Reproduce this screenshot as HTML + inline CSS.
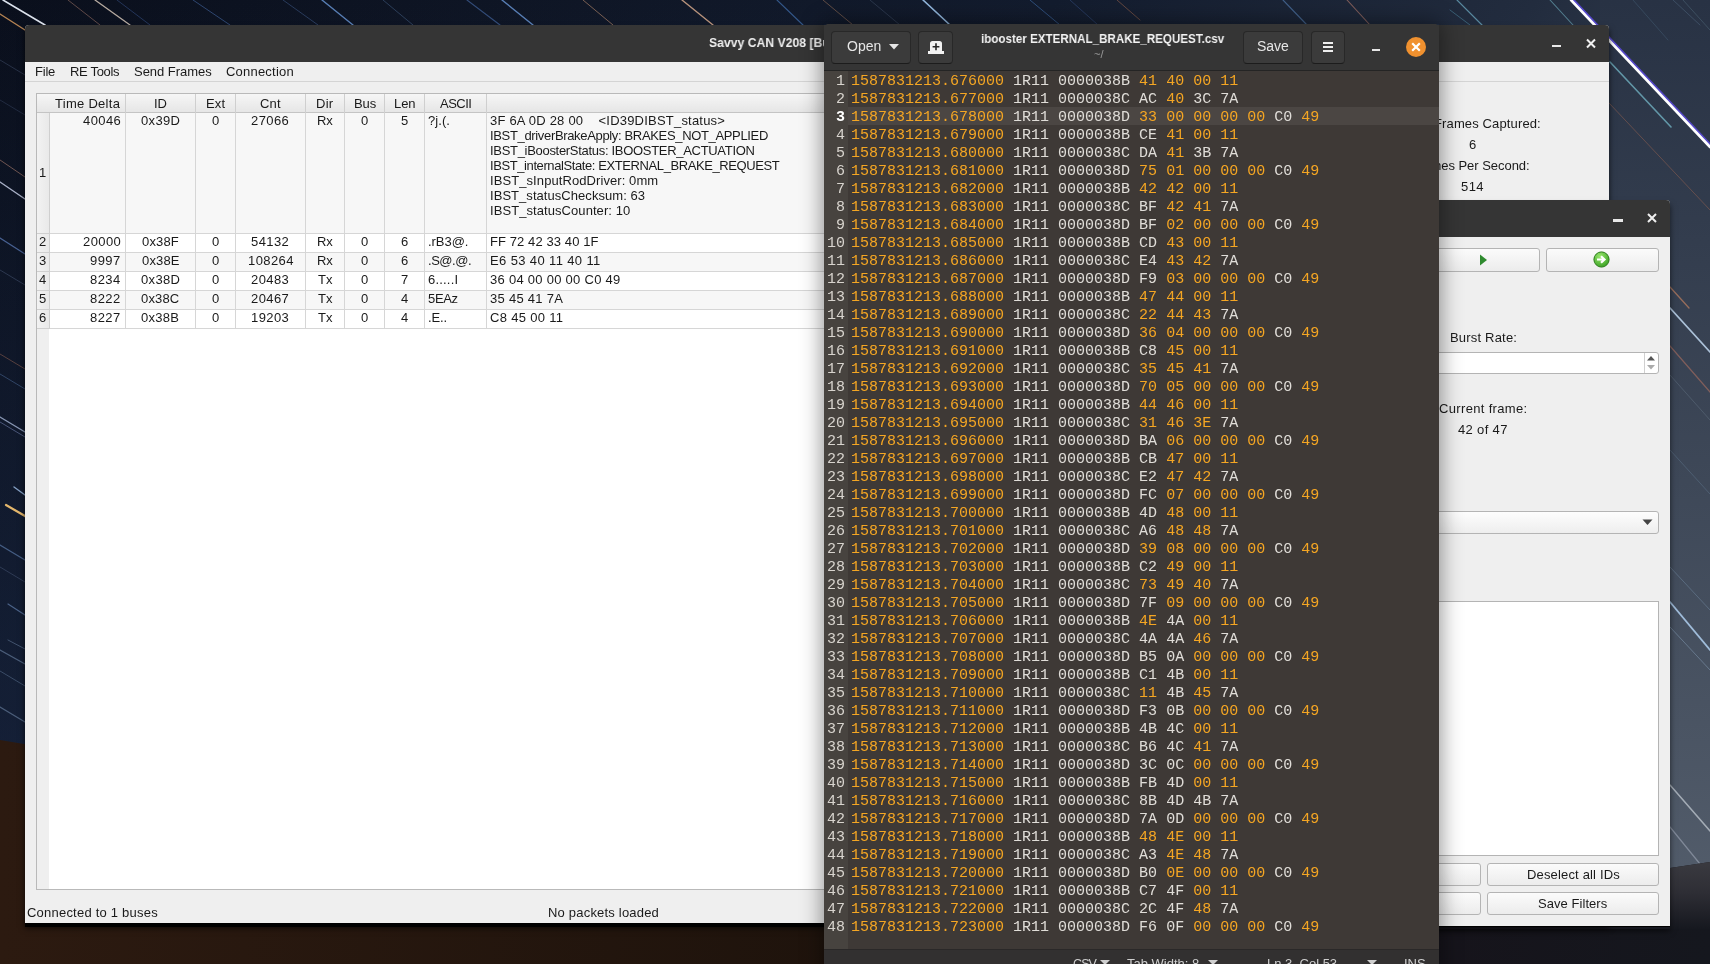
<!DOCTYPE html><html><head><meta charset="utf-8"><style>
*{box-sizing:border-box}
html,body{margin:0;padding:0}
body{width:1710px;height:964px;position:relative;overflow:hidden;background:#0d1422;font-family:"Liberation Sans",sans-serif}
.abs{position:absolute;will-change:transform}
.qt{position:absolute;will-change:transform;font-family:"Liberation Sans",sans-serif;font-size:13px;line-height:15px;white-space:pre}
.mono{font-family:"Liberation Mono",monospace;will-change:transform}
</style></head><body>
<svg class="abs" style="left:0;top:0" width="1710" height="964" viewBox="0 0 1710 964">
<defs>
<linearGradient id="sky" x1="0" y1="0" x2="1" y2="0.35">
<stop offset="0" stop-color="#0a0f1c"/><stop offset="0.55" stop-color="#131c2e"/><stop offset="0.8" stop-color="#222c3e"/><stop offset="1" stop-color="#3a4555"/>
</linearGradient>
<linearGradient id="skyr" x1="0" y1="0" x2="0" y2="1">
<stop offset="0" stop-color="#283244"/><stop offset="0.5" stop-color="#3e4858"/><stop offset="1" stop-color="#56606e"/>
</linearGradient>
<linearGradient id="mtn" x1="0" y1="0" x2="1" y2="0">
<stop offset="0" stop-color="#2c1a10"/><stop offset="0.5" stop-color="#1e130c"/><stop offset="0.8" stop-color="#16131a"/><stop offset="1" stop-color="#15171e"/>
</linearGradient>
<linearGradient id="ridge" x1="0" y1="0" x2="0" y2="1"><stop offset="0" stop-color="#3a3a40"/><stop offset="0.45" stop-color="#2e2e35"/><stop offset="1" stop-color="#15171e"/></linearGradient>
<linearGradient id="skyv" x1="0" y1="0" x2="0" y2="1"><stop offset="0" stop-color="#1a2a48" stop-opacity="0"/><stop offset="0.77" stop-color="#1c2c4c" stop-opacity="0.45"/><stop offset="1" stop-color="#1c2c4c" stop-opacity="0.45"/></linearGradient>
</defs>
<rect width="1710" height="964" fill="url(#sky)"/><rect width="1600" height="964" fill="url(#skyv)"/>
<rect x="1600" y="0" width="110" height="964" fill="url(#skyr)"/>
<line x1="3" y1="0" x2="45" y2="25" stroke="#e8eef8" stroke-width="1.6" opacity="0.95" stroke-linecap="round"/><line x1="68" y1="0" x2="100" y2="25" stroke="#b08070" stroke-width="1.0" opacity="0.5" stroke-linecap="round"/><line x1="95" y1="0" x2="130" y2="25" stroke="#e0d0c0" stroke-width="1.3" opacity="0.8" stroke-linecap="round"/><line x1="117" y1="0" x2="150" y2="25" stroke="#4060a0" stroke-width="1.0" opacity="0.45" stroke-linecap="round"/><line x1="193" y1="0" x2="230" y2="25" stroke="#4a70b0" stroke-width="1.0" opacity="0.55" stroke-linecap="round"/><line x1="283" y1="0" x2="318" y2="25" stroke="#4a6aa0" stroke-width="1.0" opacity="0.45" stroke-linecap="round"/><line x1="322" y1="0" x2="353" y2="25" stroke="#6a98d8" stroke-width="1.4" opacity="0.8" stroke-linecap="round"/><line x1="383" y1="0" x2="413" y2="25" stroke="#50709a" stroke-width="1.0" opacity="0.45" stroke-linecap="round"/><line x1="467" y1="0" x2="500" y2="25" stroke="#4a70b0" stroke-width="1.1" opacity="0.6" stroke-linecap="round"/><line x1="502" y1="0" x2="533" y2="25" stroke="#6a98d8" stroke-width="1.4" opacity="0.8" stroke-linecap="round"/><line x1="583" y1="0" x2="613" y2="25" stroke="#c09070" stroke-width="1.0" opacity="0.6" stroke-linecap="round"/><line x1="682" y1="0" x2="713" y2="25" stroke="#e0b090" stroke-width="1.4" opacity="0.8" stroke-linecap="round"/><line x1="777" y1="0" x2="803" y2="25" stroke="#4a80c8" stroke-width="1.1" opacity="0.6" stroke-linecap="round"/><line x1="823" y1="0" x2="853" y2="25" stroke="#b08060" stroke-width="1.0" opacity="0.5" stroke-linecap="round"/><line x1="870" y1="0" x2="900" y2="25" stroke="#50607a" stroke-width="1.0" opacity="0.4" stroke-linecap="round"/><line x1="923" y1="0" x2="950" y2="25" stroke="#a0c8f0" stroke-width="1.6" opacity="0.9" stroke-linecap="round"/><line x1="1030" y1="0" x2="1060" y2="25" stroke="#4a80c8" stroke-width="1.0" opacity="0.5" stroke-linecap="round"/><line x1="1070" y1="0" x2="1098" y2="25" stroke="#4060a0" stroke-width="1.0" opacity="0.4" stroke-linecap="round"/><line x1="1117" y1="0" x2="1140" y2="20" stroke="#b07050" stroke-width="1.0" opacity="0.5" stroke-linecap="round"/><line x1="1283" y1="0" x2="1307" y2="25" stroke="#5a88c0" stroke-width="1.1" opacity="0.6" stroke-linecap="round"/><line x1="1347" y1="0" x2="1370" y2="25" stroke="#c08070" stroke-width="1.1" opacity="0.6" stroke-linecap="round"/><line x1="1457" y1="0" x2="1482" y2="25" stroke="#70b0c8" stroke-width="1.2" opacity="0.7" stroke-linecap="round"/><line x1="1450" y1="10" x2="1470" y2="25" stroke="#5090a8" stroke-width="1.0" opacity="0.5" stroke-linecap="round"/><line x1="1550" y1="0" x2="1573" y2="25" stroke="#70b0c0" stroke-width="1.1" opacity="0.6" stroke-linecap="round"/><line x1="1673" y1="0" x2="1700" y2="25" stroke="#506880" stroke-width="1.0" opacity="0.5" stroke-linecap="round"/><line x1="1633" y1="0" x2="1668" y2="40" stroke="#4a6880" stroke-width="1.0" opacity="0.4" stroke-linecap="round"/><line x1="1683" y1="0" x2="1710" y2="30" stroke="#5a7888" stroke-width="1.0" opacity="0.4" stroke-linecap="round"/><line x1="1573" y1="0" x2="1712" y2="147" stroke="#5a4ad8" stroke-width="3.0" opacity="0.9" stroke-linecap="round"/><line x1="1571" y1="0" x2="1710" y2="147" stroke="#ffffff" stroke-width="2.6" opacity="1.0" stroke-linecap="round"/><line x1="1610" y1="62" x2="1671" y2="127" stroke="#70b0c0" stroke-width="1.6" opacity="0.8" stroke-linecap="round"/><line x1="1609" y1="103" x2="1710" y2="210" stroke="#906050" stroke-width="1.0" opacity="0.55" stroke-linecap="round"/><line x1="1670" y1="287" x2="1689" y2="308" stroke="#c08060" stroke-width="1.3" opacity="0.7" stroke-linecap="round"/><line x1="1670" y1="308" x2="1710" y2="352" stroke="#c0d8f0" stroke-width="1.8" opacity="0.85" stroke-linecap="round"/><line x1="1670" y1="346" x2="1710" y2="392" stroke="#b07060" stroke-width="1.2" opacity="0.6" stroke-linecap="round"/><line x1="1670" y1="375" x2="1710" y2="420" stroke="#607080" stroke-width="1.0" opacity="0.5" stroke-linecap="round"/><line x1="1670" y1="450" x2="1710" y2="494" stroke="#607890" stroke-width="1.0" opacity="0.45" stroke-linecap="round"/><line x1="1670" y1="567" x2="1710" y2="610" stroke="#7088a0" stroke-width="1.0" opacity="0.5" stroke-linecap="round"/><line x1="1670" y1="602" x2="1710" y2="650" stroke="#b0d0f0" stroke-width="1.8" opacity="0.85" stroke-linecap="round"/><line x1="1670" y1="627" x2="1710" y2="670" stroke="#8098b0" stroke-width="1.0" opacity="0.55" stroke-linecap="round"/><line x1="1670" y1="785" x2="1710" y2="831" stroke="#c0c8d0" stroke-width="1.5" opacity="0.75" stroke-linecap="round"/><line x1="1670" y1="827" x2="1700" y2="864" stroke="#a0a8b8" stroke-width="1.2" opacity="0.6" stroke-linecap="round"/><line x1="0" y1="160" x2="25" y2="177" stroke="#b08070" stroke-width="1.0" opacity="0.6" stroke-linecap="round"/><line x1="0" y1="182" x2="25" y2="199" stroke="#d0d8f0" stroke-width="1.4" opacity="0.8" stroke-linecap="round"/><line x1="0" y1="238" x2="25" y2="254" stroke="#6080c0" stroke-width="1.2" opacity="0.7" stroke-linecap="round"/><line x1="0" y1="270" x2="25" y2="285" stroke="#506080" stroke-width="1.0" opacity="0.45" stroke-linecap="round"/><line x1="0" y1="354" x2="25" y2="369" stroke="#906050" stroke-width="1.0" opacity="0.55" stroke-linecap="round"/><line x1="0" y1="374" x2="25" y2="389" stroke="#5070a0" stroke-width="1.0" opacity="0.5" stroke-linecap="round"/><line x1="0" y1="417" x2="25" y2="432" stroke="#b0c0e0" stroke-width="1.3" opacity="0.75" stroke-linecap="round"/><line x1="0" y1="422" x2="25" y2="437" stroke="#8090c0" stroke-width="1.0" opacity="0.5" stroke-linecap="round"/><line x1="14" y1="487" x2="25" y2="495" stroke="#a0c0e8" stroke-width="1.4" opacity="0.8" stroke-linecap="round"/><line x1="6" y1="505" x2="25" y2="516" stroke="#f0c070" stroke-width="2.2" opacity="0.95" stroke-linecap="round"/><line x1="0" y1="545" x2="25" y2="560" stroke="#6080b0" stroke-width="1.2" opacity="0.65" stroke-linecap="round"/><line x1="0" y1="567" x2="25" y2="582" stroke="#506080" stroke-width="1.0" opacity="0.45" stroke-linecap="round"/><line x1="8" y1="604" x2="25" y2="615" stroke="#7090c0" stroke-width="1.2" opacity="0.6" stroke-linecap="round"/><line x1="8" y1="640" x2="25" y2="649" stroke="#7088a8" stroke-width="1.0" opacity="0.5" stroke-linecap="round"/><line x1="0" y1="650" x2="25" y2="664" stroke="#7088a8" stroke-width="1.2" opacity="0.6" stroke-linecap="round"/><line x1="0" y1="671" x2="25" y2="686" stroke="#607898" stroke-width="1.0" opacity="0.5" stroke-linecap="round"/><line x1="0" y1="707" x2="25" y2="722" stroke="#7088a8" stroke-width="1.2" opacity="0.6" stroke-linecap="round"/><line x1="0" y1="100" x2="25" y2="115" stroke="#405070" stroke-width="1.0" opacity="0.4" stroke-linecap="round"/><line x1="0" y1="14" x2="25" y2="30" stroke="#e0a060" stroke-width="1.4" opacity="0.8" stroke-linecap="round"/><line x1="0" y1="60" x2="25" y2="75" stroke="#506080" stroke-width="1.0" opacity="0.4" stroke-linecap="round"/>
<path d="M0,740 L120,760 L400,800 L800,850 L1200,880 L1500,880 L1640,870 L1670,868 L1710,862 L1710,964 L0,964 Z" fill="url(#mtn)"/><path d="M1640,870 L1670,868 L1710,862 L1710,930 L1640,930 Z" fill="url(#ridge)"/>

</svg>
<div class="abs" style="left:25px;top:28px;width:1584px;height:898px;box-shadow:0 2px 6px rgba(0,0,0,0.7)"></div>
<div class="abs" style="left:25px;top:923px;width:1584px;height:4px;background:#000"></div>
<div class="abs" style="left:25px;top:25px;width:1584px;height:898px;background:#efefef;border-radius:4px 4px 0 0;overflow:hidden">
<div class="abs" style="left:0;top:0;width:100%;height:37px;background:#353535"></div>
<div class="abs" style="left:684px;top:10px;font-size:13.5px;line-height:16px;font-weight:bold;color:#f0f0f0;white-space:pre;transform:scaleX(0.905);transform-origin:0 0">Savvy CAN V208 [Build</div>
<div class="abs" style="left:1527px;top:20px;width:9px;height:2px;background:#e8e8e8"></div>
<svg class="abs" style="left:1560px;top:12px" width="12" height="12"><path d="M2,2.5 L10,10.5 M10,2.5 L2,10.5" stroke="#f0f0f0" stroke-width="2"/></svg>
<div class="abs" style="left:0;top:37px;width:100%;height:20px;background:#efefef;border-bottom:1px solid #d4d4d4"></div>
</div>
<div class="qt" style="left:35px;top:64px;letter-spacing:-0.219px;color:#1a1a1a;">File</div>
<div class="qt" style="left:70px;top:64px;letter-spacing:-0.312px;color:#1a1a1a;">RE Tools</div>
<div class="qt" style="left:134px;top:64px;letter-spacing:-0.030px;color:#1a1a1a;">Send Frames</div>
<div class="qt" style="left:226px;top:64px;letter-spacing:0.211px;color:#1a1a1a;">Connection</div>
<div class="abs" style="left:36px;top:93px;width:794px;height:797px;background:#ffffff;border:1px solid #b9b9b9"></div>
<div class="abs" style="left:37px;top:328px;width:12px;height:561px;background:#efefef"></div>
<div class="abs" style="left:37px;top:94px;width:793px;height:19px;background:linear-gradient(#f6f6f6,#e6e6e6);border-bottom:1px solid #c4c4c4"></div>
<div class="abs" style="left:125px;top:94px;width:1px;height:19px;background:#cfcfcf"></div>
<div class="abs" style="left:195px;top:94px;width:1px;height:19px;background:#cfcfcf"></div>
<div class="abs" style="left:235px;top:94px;width:1px;height:19px;background:#cfcfcf"></div>
<div class="abs" style="left:305px;top:94px;width:1px;height:19px;background:#cfcfcf"></div>
<div class="abs" style="left:344px;top:94px;width:1px;height:19px;background:#cfcfcf"></div>
<div class="abs" style="left:384px;top:94px;width:1px;height:19px;background:#cfcfcf"></div>
<div class="abs" style="left:424px;top:94px;width:1px;height:19px;background:#cfcfcf"></div>
<div class="abs" style="left:486px;top:94px;width:1px;height:19px;background:#cfcfcf"></div>
<div class="qt" style="left:54.9px;top:96px;letter-spacing:0.281px;color:#1a1a1a;">Time Delta</div>
<div class="qt" style="left:154.1px;top:96px;letter-spacing:-0.109px;color:#1a1a1a;">ID</div>
<div class="qt" style="left:205.8px;top:96px;letter-spacing:0.203px;color:#1a1a1a;">Ext</div>
<div class="qt" style="left:260.2px;top:96px;letter-spacing:0.151px;color:#1a1a1a;">Cnt</div>
<div class="qt" style="left:316.2px;top:96px;letter-spacing:0.297px;color:#1a1a1a;">Dir</div>
<div class="qt" style="left:353.5px;top:96px;letter-spacing:-0.104px;color:#1a1a1a;">Bus</div>
<div class="qt" style="left:393.8px;top:96px;letter-spacing:-0.073px;color:#1a1a1a;">Len</div>
<div class="qt" style="left:439.9px;top:96px;letter-spacing:-0.531px;color:#1a1a1a;">ASCII</div>
<div class="abs" style="left:50px;top:113px;width:780px;height:121px;background:#f7f7f7;border-bottom:1px solid #d6d6d6"></div>
<div class="abs" style="left:37px;top:113px;width:13px;height:121px;background:linear-gradient(90deg,#f2f2f2,#e9e9e9);border-bottom:1px solid #cfcfcf;border-right:1px solid #cfcfcf"></div>
<div class="abs" style="left:125px;top:113px;width:1px;height:121px;background:#d6d6d6"></div>
<div class="abs" style="left:195px;top:113px;width:1px;height:121px;background:#d6d6d6"></div>
<div class="abs" style="left:235px;top:113px;width:1px;height:121px;background:#d6d6d6"></div>
<div class="abs" style="left:305px;top:113px;width:1px;height:121px;background:#d6d6d6"></div>
<div class="abs" style="left:344px;top:113px;width:1px;height:121px;background:#d6d6d6"></div>
<div class="abs" style="left:384px;top:113px;width:1px;height:121px;background:#d6d6d6"></div>
<div class="abs" style="left:424px;top:113px;width:1px;height:121px;background:#d6d6d6"></div>
<div class="abs" style="left:486px;top:113px;width:1px;height:121px;background:#d6d6d6"></div>
<div class="qt" style="left:39px;top:165px;letter-spacing:0.406px;color:#1a1a1a;">1</div>
<div class="qt" style="left:82.8px;top:113px;letter-spacing:0.406px;color:#1a1a1a;">40046</div>
<div class="qt" style="left:140.9px;top:113px;letter-spacing:0.334px;color:#1a1a1a;">0x39D</div>
<div class="qt" style="left:211.7px;top:113px;letter-spacing:0.406px;color:#1a1a1a;">0</div>
<div class="qt" style="left:251.4px;top:113px;letter-spacing:0.406px;color:#1a1a1a;">27066</div>
<div class="qt" style="left:317.3px;top:113px;letter-spacing:-0.219px;color:#1a1a1a;">Rx</div>
<div class="qt" style="left:360.7px;top:113px;letter-spacing:0.406px;color:#1a1a1a;">0</div>
<div class="qt" style="left:400.7px;top:113px;letter-spacing:0.406px;color:#1a1a1a;">5</div>
<div class="qt" style="left:428px;top:113px;letter-spacing:0.069px;color:#1a1a1a;">?j.(.</div>
<div class="qt" style="left:490px;top:113px;letter-spacing:0.208px;color:#1a1a1a;">3F 6A 0D 28 00    &lt;ID39DIBST_status&gt;</div>
<div class="qt" style="left:490px;top:128px;letter-spacing:-0.339px;color:#1a1a1a;">IBST_driverBrakeApply: BRAKES_NOT_APPLIED</div>
<div class="qt" style="left:490px;top:143px;letter-spacing:-0.304px;color:#1a1a1a;">IBST_iBoosterStatus: IBOOSTER_ACTUATION</div>
<div class="qt" style="left:490px;top:158px;letter-spacing:-0.405px;color:#1a1a1a;">IBST_internalState: EXTERNAL_BRAKE_REQUEST</div>
<div class="qt" style="left:490px;top:173px;letter-spacing:0.083px;color:#1a1a1a;">IBST_sInputRodDriver: 0mm</div>
<div class="qt" style="left:490px;top:188px;letter-spacing:0.048px;color:#1a1a1a;">IBST_statusChecksum: 63</div>
<div class="qt" style="left:490px;top:203px;letter-spacing:0.070px;color:#1a1a1a;">IBST_statusCounter: 10</div>
<div class="abs" style="left:50px;top:234px;width:780px;height:19px;background:#ffffff;border-bottom:1px solid #d6d6d6"></div>
<div class="abs" style="left:37px;top:234px;width:13px;height:19px;background:linear-gradient(90deg,#f2f2f2,#e9e9e9);border-bottom:1px solid #cfcfcf;border-right:1px solid #cfcfcf"></div>
<div class="abs" style="left:125px;top:234px;width:1px;height:19px;background:#d6d6d6"></div>
<div class="abs" style="left:195px;top:234px;width:1px;height:19px;background:#d6d6d6"></div>
<div class="abs" style="left:235px;top:234px;width:1px;height:19px;background:#d6d6d6"></div>
<div class="abs" style="left:305px;top:234px;width:1px;height:19px;background:#d6d6d6"></div>
<div class="abs" style="left:344px;top:234px;width:1px;height:19px;background:#d6d6d6"></div>
<div class="abs" style="left:384px;top:234px;width:1px;height:19px;background:#d6d6d6"></div>
<div class="abs" style="left:424px;top:234px;width:1px;height:19px;background:#d6d6d6"></div>
<div class="abs" style="left:486px;top:234px;width:1px;height:19px;background:#d6d6d6"></div>
<div class="qt" style="left:39px;top:234px;letter-spacing:0.406px;color:#1a1a1a;">2</div>
<div class="qt" style="left:82.8px;top:234px;letter-spacing:0.406px;color:#1a1a1a;">20000</div>
<div class="qt" style="left:142.0px;top:234px;letter-spacing:0.159px;color:#1a1a1a;">0x38F</div>
<div class="qt" style="left:211.7px;top:234px;letter-spacing:0.406px;color:#1a1a1a;">0</div>
<div class="qt" style="left:251.4px;top:234px;letter-spacing:0.406px;color:#1a1a1a;">54132</div>
<div class="qt" style="left:317.3px;top:234px;letter-spacing:-0.219px;color:#1a1a1a;">Rx</div>
<div class="qt" style="left:360.7px;top:234px;letter-spacing:0.406px;color:#1a1a1a;">0</div>
<div class="qt" style="left:400.7px;top:234px;letter-spacing:0.406px;color:#1a1a1a;">6</div>
<div class="qt" style="left:428px;top:234px;letter-spacing:-0.036px;color:#1a1a1a;">.rB3@.</div>
<div class="qt" style="left:490px;top:234px;letter-spacing:0.093px;color:#1a1a1a;">FF 72 42 33 40 1F</div>
<div class="abs" style="left:50px;top:253px;width:780px;height:19px;background:#f7f7f7;border-bottom:1px solid #d6d6d6"></div>
<div class="abs" style="left:37px;top:253px;width:13px;height:19px;background:linear-gradient(90deg,#f2f2f2,#e9e9e9);border-bottom:1px solid #cfcfcf;border-right:1px solid #cfcfcf"></div>
<div class="abs" style="left:125px;top:253px;width:1px;height:19px;background:#d6d6d6"></div>
<div class="abs" style="left:195px;top:253px;width:1px;height:19px;background:#d6d6d6"></div>
<div class="abs" style="left:235px;top:253px;width:1px;height:19px;background:#d6d6d6"></div>
<div class="abs" style="left:305px;top:253px;width:1px;height:19px;background:#d6d6d6"></div>
<div class="abs" style="left:344px;top:253px;width:1px;height:19px;background:#d6d6d6"></div>
<div class="abs" style="left:384px;top:253px;width:1px;height:19px;background:#d6d6d6"></div>
<div class="abs" style="left:424px;top:253px;width:1px;height:19px;background:#d6d6d6"></div>
<div class="abs" style="left:486px;top:253px;width:1px;height:19px;background:#d6d6d6"></div>
<div class="qt" style="left:39px;top:253px;letter-spacing:0.406px;color:#1a1a1a;">3</div>
<div class="qt" style="left:90.4px;top:253px;letter-spacing:0.406px;color:#1a1a1a;">9997</div>
<div class="qt" style="left:141.7px;top:253px;letter-spacing:0.147px;color:#1a1a1a;">0x38E</div>
<div class="qt" style="left:211.7px;top:253px;letter-spacing:0.406px;color:#1a1a1a;">0</div>
<div class="qt" style="left:247.6px;top:253px;letter-spacing:0.406px;color:#1a1a1a;">108264</div>
<div class="qt" style="left:317.3px;top:253px;letter-spacing:-0.219px;color:#1a1a1a;">Rx</div>
<div class="qt" style="left:360.7px;top:253px;letter-spacing:0.406px;color:#1a1a1a;">0</div>
<div class="qt" style="left:400.7px;top:253px;letter-spacing:0.406px;color:#1a1a1a;">6</div>
<div class="qt" style="left:428px;top:253px;letter-spacing:-0.474px;color:#1a1a1a;">.S@.@.</div>
<div class="qt" style="left:490px;top:253px;letter-spacing:0.372px;color:#1a1a1a;">E6 53 40 11 40 11</div>
<div class="abs" style="left:50px;top:272px;width:780px;height:19px;background:#ffffff;border-bottom:1px solid #d6d6d6"></div>
<div class="abs" style="left:37px;top:272px;width:13px;height:19px;background:linear-gradient(90deg,#f2f2f2,#e9e9e9);border-bottom:1px solid #cfcfcf;border-right:1px solid #cfcfcf"></div>
<div class="abs" style="left:125px;top:272px;width:1px;height:19px;background:#d6d6d6"></div>
<div class="abs" style="left:195px;top:272px;width:1px;height:19px;background:#d6d6d6"></div>
<div class="abs" style="left:235px;top:272px;width:1px;height:19px;background:#d6d6d6"></div>
<div class="abs" style="left:305px;top:272px;width:1px;height:19px;background:#d6d6d6"></div>
<div class="abs" style="left:344px;top:272px;width:1px;height:19px;background:#d6d6d6"></div>
<div class="abs" style="left:384px;top:272px;width:1px;height:19px;background:#d6d6d6"></div>
<div class="abs" style="left:424px;top:272px;width:1px;height:19px;background:#d6d6d6"></div>
<div class="abs" style="left:486px;top:272px;width:1px;height:19px;background:#d6d6d6"></div>
<div class="qt" style="left:39px;top:272px;letter-spacing:0.406px;color:#1a1a1a;">4</div>
<div class="qt" style="left:90.4px;top:272px;letter-spacing:0.406px;color:#1a1a1a;">8234</div>
<div class="qt" style="left:140.9px;top:272px;letter-spacing:0.334px;color:#1a1a1a;">0x38D</div>
<div class="qt" style="left:211.7px;top:272px;letter-spacing:0.406px;color:#1a1a1a;">0</div>
<div class="qt" style="left:251.4px;top:272px;letter-spacing:0.406px;color:#1a1a1a;">20483</div>
<div class="qt" style="left:317.8px;top:272px;letter-spacing:0.000px;color:#1a1a1a;">Tx</div>
<div class="qt" style="left:360.7px;top:272px;letter-spacing:0.406px;color:#1a1a1a;">0</div>
<div class="qt" style="left:400.7px;top:272px;letter-spacing:0.406px;color:#1a1a1a;">7</div>
<div class="qt" style="left:428px;top:272px;letter-spacing:0.194px;color:#1a1a1a;">6.....I</div>
<div class="qt" style="left:490px;top:272px;letter-spacing:0.274px;color:#1a1a1a;">36 04 00 00 00 C0 49</div>
<div class="abs" style="left:50px;top:291px;width:780px;height:19px;background:#f7f7f7;border-bottom:1px solid #d6d6d6"></div>
<div class="abs" style="left:37px;top:291px;width:13px;height:19px;background:linear-gradient(90deg,#f2f2f2,#e9e9e9);border-bottom:1px solid #cfcfcf;border-right:1px solid #cfcfcf"></div>
<div class="abs" style="left:125px;top:291px;width:1px;height:19px;background:#d6d6d6"></div>
<div class="abs" style="left:195px;top:291px;width:1px;height:19px;background:#d6d6d6"></div>
<div class="abs" style="left:235px;top:291px;width:1px;height:19px;background:#d6d6d6"></div>
<div class="abs" style="left:305px;top:291px;width:1px;height:19px;background:#d6d6d6"></div>
<div class="abs" style="left:344px;top:291px;width:1px;height:19px;background:#d6d6d6"></div>
<div class="abs" style="left:384px;top:291px;width:1px;height:19px;background:#d6d6d6"></div>
<div class="abs" style="left:424px;top:291px;width:1px;height:19px;background:#d6d6d6"></div>
<div class="abs" style="left:486px;top:291px;width:1px;height:19px;background:#d6d6d6"></div>
<div class="qt" style="left:39px;top:291px;letter-spacing:0.406px;color:#1a1a1a;">5</div>
<div class="qt" style="left:90.4px;top:291px;letter-spacing:0.406px;color:#1a1a1a;">8222</div>
<div class="qt" style="left:141.3px;top:291px;letter-spacing:0.163px;color:#1a1a1a;">0x38C</div>
<div class="qt" style="left:211.7px;top:291px;letter-spacing:0.406px;color:#1a1a1a;">0</div>
<div class="qt" style="left:251.4px;top:291px;letter-spacing:0.406px;color:#1a1a1a;">20467</div>
<div class="qt" style="left:317.8px;top:291px;letter-spacing:0.000px;color:#1a1a1a;">Tx</div>
<div class="qt" style="left:360.7px;top:291px;letter-spacing:0.406px;color:#1a1a1a;">0</div>
<div class="qt" style="left:400.7px;top:291px;letter-spacing:0.406px;color:#1a1a1a;">4</div>
<div class="qt" style="left:428px;top:291px;letter-spacing:-0.340px;color:#1a1a1a;">5EAz</div>
<div class="qt" style="left:490px;top:291px;letter-spacing:0.271px;color:#1a1a1a;">35 45 41 7A</div>
<div class="abs" style="left:50px;top:310px;width:780px;height:19px;background:#ffffff;border-bottom:1px solid #d6d6d6"></div>
<div class="abs" style="left:37px;top:310px;width:13px;height:19px;background:linear-gradient(90deg,#f2f2f2,#e9e9e9);border-bottom:1px solid #cfcfcf;border-right:1px solid #cfcfcf"></div>
<div class="abs" style="left:125px;top:310px;width:1px;height:19px;background:#d6d6d6"></div>
<div class="abs" style="left:195px;top:310px;width:1px;height:19px;background:#d6d6d6"></div>
<div class="abs" style="left:235px;top:310px;width:1px;height:19px;background:#d6d6d6"></div>
<div class="abs" style="left:305px;top:310px;width:1px;height:19px;background:#d6d6d6"></div>
<div class="abs" style="left:344px;top:310px;width:1px;height:19px;background:#d6d6d6"></div>
<div class="abs" style="left:384px;top:310px;width:1px;height:19px;background:#d6d6d6"></div>
<div class="abs" style="left:424px;top:310px;width:1px;height:19px;background:#d6d6d6"></div>
<div class="abs" style="left:486px;top:310px;width:1px;height:19px;background:#d6d6d6"></div>
<div class="qt" style="left:39px;top:310px;letter-spacing:0.406px;color:#1a1a1a;">6</div>
<div class="qt" style="left:90.4px;top:310px;letter-spacing:0.406px;color:#1a1a1a;">8227</div>
<div class="qt" style="left:141.4px;top:310px;letter-spacing:0.278px;color:#1a1a1a;">0x38B</div>
<div class="qt" style="left:211.7px;top:310px;letter-spacing:0.406px;color:#1a1a1a;">0</div>
<div class="qt" style="left:251.4px;top:310px;letter-spacing:0.406px;color:#1a1a1a;">19203</div>
<div class="qt" style="left:317.8px;top:310px;letter-spacing:0.000px;color:#1a1a1a;">Tx</div>
<div class="qt" style="left:360.7px;top:310px;letter-spacing:0.406px;color:#1a1a1a;">0</div>
<div class="qt" style="left:400.7px;top:310px;letter-spacing:0.406px;color:#1a1a1a;">4</div>
<div class="qt" style="left:428px;top:310px;letter-spacing:-0.121px;color:#1a1a1a;">.E..</div>
<div class="qt" style="left:490px;top:310px;letter-spacing:0.310px;color:#1a1a1a;">C8 45 00 11</div>
<div class="qt" style="left:27px;top:905px;letter-spacing:0.219px;color:#1a1a1a;">Connected to 1 buses</div>
<div class="qt" style="left:548px;top:905px;letter-spacing:0.198px;color:#1a1a1a;">No packets loaded</div>
<div class="qt" style="left:1433.6px;top:116px;letter-spacing:0.131px;color:#1a1a1a;">Frames Captured:</div>
<div class="qt" style="left:1469.2px;top:137px;letter-spacing:0.406px;color:#1a1a1a;">6</div>
<div class="qt" style="left:1411.3px;top:158px;letter-spacing:-0.032px;color:#1a1a1a;">Frames Per Second:</div>
<div class="qt" style="left:1460.5px;top:179px;letter-spacing:0.406px;color:#1a1a1a;">514</div>
<div class="abs" style="left:1300px;top:203px;width:370px;height:726px;box-shadow:0 2px 6px rgba(0,0,0,0.6)"></div>
<div class="abs" style="left:1300px;top:926px;width:370px;height:1px;background:#000"></div>
<div class="abs" style="left:1300px;top:200px;width:370px;height:726px;background:#efefef;border-radius:4px 4px 0 0;overflow:hidden">
<div class="abs" style="left:0;top:0;width:100%;height:37px;background:#353535"></div>
</div>
<div class="abs" style="left:1613px;top:219px;width:10px;height:3px;background:#e8e8e8"></div>
<svg class="abs" style="left:1646px;top:212px" width="12" height="12"><path d="M2,2 L10,10 M10,2 L2,10" stroke="#f0f0f0" stroke-width="2"/></svg>
<div class="abs" style="left:1420px;top:248px;width:120px;height:24px;background:linear-gradient(#fbfbfb,#ececec);border:1px solid #b4b4b4;border-radius:3px"></div>
<div class="abs" style="left:1546px;top:248px;width:113px;height:24px;background:linear-gradient(#fbfbfb,#ececec);border:1px solid #b4b4b4;border-radius:3px"></div>
<svg class="abs" style="left:1479px;top:254px" width="10" height="12"><path d="M1,0.5 L8,6 L1,11.5 Z" fill="#2e8a2e"/></svg>
<svg class="abs" style="left:1593px;top:251px" width="17" height="17"><defs><radialGradient id="ga" cx="0.4" cy="0.3" r="0.8"><stop offset="0" stop-color="#9be870"/><stop offset="1" stop-color="#2f9a1a"/></radialGradient></defs><circle cx="8.5" cy="8.5" r="7.6" fill="url(#ga)" stroke="#2a7a18" stroke-width="1"/><path d="M4,8.5 H11 M8,5.2 L11.5,8.5 L8,11.8" stroke="#fff" stroke-width="2.2" fill="none"/></svg>
<div class="qt" style="left:1449.5px;top:330px;letter-spacing:0.190px;color:#1a1a1a;">Burst Rate:</div>
<div class="abs" style="left:1420px;top:352px;width:239px;height:22px;background:#fff;border:1px solid #b4b4b4;border-radius:3px"></div>
<div class="abs" style="left:1644px;top:353px;width:1px;height:20px;background:#d0d0d0"></div>
<svg class="abs" style="left:1646px;top:355px" width="10" height="16"><path d="M1,5.5 L5,1 L9,5.5 Z" fill="#555"/><path d="M1,10 L5,14.5 L9,10 Z" fill="#aaa"/></svg>
<div class="qt" style="left:1439.3px;top:401px;letter-spacing:0.338px;color:#1a1a1a;">Current frame:</div>
<div class="qt" style="left:1458.4px;top:422px;letter-spacing:0.344px;color:#1a1a1a;">42 of 47</div>
<div class="abs" style="left:1420px;top:511px;width:239px;height:23px;background:linear-gradient(#fdfdfd,#eeeeee);border:1px solid #b4b4b4;border-radius:3px"></div>
<svg class="abs" style="left:1642px;top:519px" width="11" height="7"><path d="M0.5,0.5 L10.5,0.5 L5.5,6 Z" fill="#444"/></svg>
<div class="abs" style="left:1420px;top:601px;width:239px;height:255px;background:#fff;border:1px solid #b4b4b4"></div>
<div class="abs" style="left:1400px;top:863px;width:81px;height:23px;background:linear-gradient(#fbfbfb,#ececec);border:1px solid #b4b4b4;border-radius:3px"></div>
<div class="abs" style="left:1487px;top:863px;width:172px;height:23px;background:linear-gradient(#fbfbfb,#ececec);border:1px solid #b4b4b4;border-radius:3px"></div>
<div class="abs" style="left:1400px;top:892px;width:81px;height:23px;background:linear-gradient(#fbfbfb,#ececec);border:1px solid #b4b4b4;border-radius:3px"></div>
<div class="abs" style="left:1487px;top:892px;width:172px;height:23px;background:linear-gradient(#fbfbfb,#ececec);border:1px solid #b4b4b4;border-radius:3px"></div>
<div class="qt" style="left:1526.5px;top:867px;letter-spacing:0.164px;color:#1a1a1a;">Deselect all IDs</div>
<div class="qt" style="left:1538.4px;top:896px;letter-spacing:0.052px;color:#1a1a1a;">Save Filters</div>
<div class="abs" style="left:824px;top:24px;width:615px;height:960px;box-shadow:0 0 20px 2px rgba(0,0,0,0.42)"></div>
<div class="abs" style="left:824px;top:24px;width:615px;height:960px;background:#3e3936;border-radius:5px 5px 0 0;overflow:hidden">
<div class="abs" style="left:0;top:0;width:100%;height:47px;background:#353535;border-bottom:1px solid #242424"></div>
</div>
<div class="abs" style="left:831px;top:31px;width:80px;height:33px;background:#3b3b3b;border:1px solid #282828;border-bottom-color:#1c1c1c;border-radius:4px"></div>
<div class="abs" style="left:847px;top:38px;font-size:14px;color:#e6e6e6;line-height:16px">Open</div>
<svg class="abs" style="left:889px;top:44px" width="11" height="7"><path d="M0,0 L10,0 L5,5.5 Z" fill="#e6e6e6"/></svg>
<div class="abs" style="left:918px;top:31px;width:35px;height:33px;background:#3b3b3b;border:1px solid #282828;border-bottom-color:#1c1c1c;border-radius:4px"></div>
<svg class="abs" style="left:927px;top:40px" width="18" height="15"><path d="M1,14 V11 H3 V3.5 Q3,1 5.5,1 H12.5 Q15,1 15,3.5 V11 H17 V14 Z" fill="#f2f2f2"/><path d="M9,3.3 V10.3 M5.6,6.8 H12.4" stroke="#262626" stroke-width="1.6"/></svg>
<div class="abs" style="left:981px;top:31px;font-size:13.5px;font-weight:bold;color:#f2f2f2;line-height:16px;white-space:pre;transform:scaleX(0.86);transform-origin:0 0">ibooster EXTERNAL_BRAKE_REQUEST.csv</div>
<div class="abs" style="left:1094px;top:48px;font-size:11px;color:#9a9a9a;line-height:12px">~/</div>
<div class="abs" style="left:1243px;top:31px;width:60px;height:33px;background:#3b3b3b;border:1px solid #282828;border-bottom-color:#1c1c1c;border-radius:4px"></div>
<div class="abs" style="left:1257px;top:38px;font-size:14px;color:#e6e6e6;line-height:16px">Save</div>
<div class="abs" style="left:1311px;top:31px;width:34px;height:33px;background:#3b3b3b;border:1px solid #282828;border-bottom-color:#1c1c1c;border-radius:4px"></div>
<svg class="abs" style="left:1321px;top:40px" width="14" height="14"><path d="M2,3 H12 M2,7 H12 M2,11 H12" stroke="#eee" stroke-width="1.8"/></svg>
<div class="abs" style="left:1372px;top:49px;width:8px;height:2px;background:#e6e6e6"></div>
<svg class="abs" style="left:1405px;top:36px" width="22" height="22"><circle cx="11" cy="11" r="10" fill="#f0912f"/><path d="M7.2,7.2 L14.8,14.8 M14.8,7.2 L7.2,14.8" stroke="#fff" stroke-width="2.2"/></svg>
<div class="abs" style="left:824px;top:71px;width:24px;height:878px;background:#47433f"></div>
<div class="abs" style="left:848px;top:107px;width:591px;height:18px;background:#4b4643"></div>
<div class="abs mono" style="left:836px;top:73px;font-size:15px;line-height:18px;color:#d8d4ce;">1</div>
<div class="abs mono" style="left:836px;top:91px;font-size:15px;line-height:18px;color:#d8d4ce;">2</div>
<div class="abs mono" style="left:836px;top:109px;font-size:15px;line-height:18px;color:#ffffff;font-weight:bold;">3</div>
<div class="abs mono" style="left:836px;top:127px;font-size:15px;line-height:18px;color:#d8d4ce;">4</div>
<div class="abs mono" style="left:836px;top:145px;font-size:15px;line-height:18px;color:#d8d4ce;">5</div>
<div class="abs mono" style="left:836px;top:163px;font-size:15px;line-height:18px;color:#d8d4ce;">6</div>
<div class="abs mono" style="left:836px;top:181px;font-size:15px;line-height:18px;color:#d8d4ce;">7</div>
<div class="abs mono" style="left:836px;top:199px;font-size:15px;line-height:18px;color:#d8d4ce;">8</div>
<div class="abs mono" style="left:836px;top:217px;font-size:15px;line-height:18px;color:#d8d4ce;">9</div>
<div class="abs mono" style="left:827px;top:235px;font-size:15px;line-height:18px;color:#d8d4ce;">10</div>
<div class="abs mono" style="left:827px;top:253px;font-size:15px;line-height:18px;color:#d8d4ce;">11</div>
<div class="abs mono" style="left:827px;top:271px;font-size:15px;line-height:18px;color:#d8d4ce;">12</div>
<div class="abs mono" style="left:827px;top:289px;font-size:15px;line-height:18px;color:#d8d4ce;">13</div>
<div class="abs mono" style="left:827px;top:307px;font-size:15px;line-height:18px;color:#d8d4ce;">14</div>
<div class="abs mono" style="left:827px;top:325px;font-size:15px;line-height:18px;color:#d8d4ce;">15</div>
<div class="abs mono" style="left:827px;top:343px;font-size:15px;line-height:18px;color:#d8d4ce;">16</div>
<div class="abs mono" style="left:827px;top:361px;font-size:15px;line-height:18px;color:#d8d4ce;">17</div>
<div class="abs mono" style="left:827px;top:379px;font-size:15px;line-height:18px;color:#d8d4ce;">18</div>
<div class="abs mono" style="left:827px;top:397px;font-size:15px;line-height:18px;color:#d8d4ce;">19</div>
<div class="abs mono" style="left:827px;top:415px;font-size:15px;line-height:18px;color:#d8d4ce;">20</div>
<div class="abs mono" style="left:827px;top:433px;font-size:15px;line-height:18px;color:#d8d4ce;">21</div>
<div class="abs mono" style="left:827px;top:451px;font-size:15px;line-height:18px;color:#d8d4ce;">22</div>
<div class="abs mono" style="left:827px;top:469px;font-size:15px;line-height:18px;color:#d8d4ce;">23</div>
<div class="abs mono" style="left:827px;top:487px;font-size:15px;line-height:18px;color:#d8d4ce;">24</div>
<div class="abs mono" style="left:827px;top:505px;font-size:15px;line-height:18px;color:#d8d4ce;">25</div>
<div class="abs mono" style="left:827px;top:523px;font-size:15px;line-height:18px;color:#d8d4ce;">26</div>
<div class="abs mono" style="left:827px;top:541px;font-size:15px;line-height:18px;color:#d8d4ce;">27</div>
<div class="abs mono" style="left:827px;top:559px;font-size:15px;line-height:18px;color:#d8d4ce;">28</div>
<div class="abs mono" style="left:827px;top:577px;font-size:15px;line-height:18px;color:#d8d4ce;">29</div>
<div class="abs mono" style="left:827px;top:595px;font-size:15px;line-height:18px;color:#d8d4ce;">30</div>
<div class="abs mono" style="left:827px;top:613px;font-size:15px;line-height:18px;color:#d8d4ce;">31</div>
<div class="abs mono" style="left:827px;top:631px;font-size:15px;line-height:18px;color:#d8d4ce;">32</div>
<div class="abs mono" style="left:827px;top:649px;font-size:15px;line-height:18px;color:#d8d4ce;">33</div>
<div class="abs mono" style="left:827px;top:667px;font-size:15px;line-height:18px;color:#d8d4ce;">34</div>
<div class="abs mono" style="left:827px;top:685px;font-size:15px;line-height:18px;color:#d8d4ce;">35</div>
<div class="abs mono" style="left:827px;top:703px;font-size:15px;line-height:18px;color:#d8d4ce;">36</div>
<div class="abs mono" style="left:827px;top:721px;font-size:15px;line-height:18px;color:#d8d4ce;">37</div>
<div class="abs mono" style="left:827px;top:739px;font-size:15px;line-height:18px;color:#d8d4ce;">38</div>
<div class="abs mono" style="left:827px;top:757px;font-size:15px;line-height:18px;color:#d8d4ce;">39</div>
<div class="abs mono" style="left:827px;top:775px;font-size:15px;line-height:18px;color:#d8d4ce;">40</div>
<div class="abs mono" style="left:827px;top:793px;font-size:15px;line-height:18px;color:#d8d4ce;">41</div>
<div class="abs mono" style="left:827px;top:811px;font-size:15px;line-height:18px;color:#d8d4ce;">42</div>
<div class="abs mono" style="left:827px;top:829px;font-size:15px;line-height:18px;color:#d8d4ce;">43</div>
<div class="abs mono" style="left:827px;top:847px;font-size:15px;line-height:18px;color:#d8d4ce;">44</div>
<div class="abs mono" style="left:827px;top:865px;font-size:15px;line-height:18px;color:#d8d4ce;">45</div>
<div class="abs mono" style="left:827px;top:883px;font-size:15px;line-height:18px;color:#d8d4ce;">46</div>
<div class="abs mono" style="left:827px;top:901px;font-size:15px;line-height:18px;color:#d8d4ce;">47</div>
<div class="abs mono" style="left:827px;top:919px;font-size:15px;line-height:18px;color:#d8d4ce;">48</div>
<div class="abs mono" style="left:851px;top:73px;font-size:15px;line-height:18px;white-space:pre"><span style="color:#f5a623">1587831213.676000</span> <span style="color:#e0ddd8">1R11</span> <span style="color:#e0ddd8">0000038B</span> <span style="color:#f5a623">41</span> <span style="color:#f5a623">40</span> <span style="color:#f5a623">00</span> <span style="color:#f5a623">11</span>
<span style="color:#f5a623">1587831213.677000</span> <span style="color:#e0ddd8">1R11</span> <span style="color:#e0ddd8">0000038C</span> <span style="color:#e0ddd8">AC</span> <span style="color:#f5a623">40</span> <span style="color:#e0ddd8">3C</span> <span style="color:#e0ddd8">7A</span>
<span style="color:#f5a623">1587831213.678000</span> <span style="color:#e0ddd8">1R11</span> <span style="color:#e0ddd8">0000038D</span> <span style="color:#f5a623">33</span> <span style="color:#f5a623">00</span> <span style="color:#f5a623">00</span> <span style="color:#f5a623">00</span> <span style="color:#f5a623">00</span> <span style="color:#e0ddd8">C0</span> <span style="color:#f5a623">49</span>
<span style="color:#f5a623">1587831213.679000</span> <span style="color:#e0ddd8">1R11</span> <span style="color:#e0ddd8">0000038B</span> <span style="color:#e0ddd8">CE</span> <span style="color:#f5a623">41</span> <span style="color:#f5a623">00</span> <span style="color:#f5a623">11</span>
<span style="color:#f5a623">1587831213.680000</span> <span style="color:#e0ddd8">1R11</span> <span style="color:#e0ddd8">0000038C</span> <span style="color:#e0ddd8">DA</span> <span style="color:#f5a623">41</span> <span style="color:#e0ddd8">3B</span> <span style="color:#e0ddd8">7A</span>
<span style="color:#f5a623">1587831213.681000</span> <span style="color:#e0ddd8">1R11</span> <span style="color:#e0ddd8">0000038D</span> <span style="color:#f5a623">75</span> <span style="color:#f5a623">01</span> <span style="color:#f5a623">00</span> <span style="color:#f5a623">00</span> <span style="color:#f5a623">00</span> <span style="color:#e0ddd8">C0</span> <span style="color:#f5a623">49</span>
<span style="color:#f5a623">1587831213.682000</span> <span style="color:#e0ddd8">1R11</span> <span style="color:#e0ddd8">0000038B</span> <span style="color:#f5a623">42</span> <span style="color:#f5a623">42</span> <span style="color:#f5a623">00</span> <span style="color:#f5a623">11</span>
<span style="color:#f5a623">1587831213.683000</span> <span style="color:#e0ddd8">1R11</span> <span style="color:#e0ddd8">0000038C</span> <span style="color:#e0ddd8">BF</span> <span style="color:#f5a623">42</span> <span style="color:#f5a623">41</span> <span style="color:#e0ddd8">7A</span>
<span style="color:#f5a623">1587831213.684000</span> <span style="color:#e0ddd8">1R11</span> <span style="color:#e0ddd8">0000038D</span> <span style="color:#e0ddd8">BF</span> <span style="color:#f5a623">02</span> <span style="color:#f5a623">00</span> <span style="color:#f5a623">00</span> <span style="color:#f5a623">00</span> <span style="color:#e0ddd8">C0</span> <span style="color:#f5a623">49</span>
<span style="color:#f5a623">1587831213.685000</span> <span style="color:#e0ddd8">1R11</span> <span style="color:#e0ddd8">0000038B</span> <span style="color:#e0ddd8">CD</span> <span style="color:#f5a623">43</span> <span style="color:#f5a623">00</span> <span style="color:#f5a623">11</span>
<span style="color:#f5a623">1587831213.686000</span> <span style="color:#e0ddd8">1R11</span> <span style="color:#e0ddd8">0000038C</span> <span style="color:#e0ddd8">E4</span> <span style="color:#f5a623">43</span> <span style="color:#f5a623">42</span> <span style="color:#e0ddd8">7A</span>
<span style="color:#f5a623">1587831213.687000</span> <span style="color:#e0ddd8">1R11</span> <span style="color:#e0ddd8">0000038D</span> <span style="color:#e0ddd8">F9</span> <span style="color:#f5a623">03</span> <span style="color:#f5a623">00</span> <span style="color:#f5a623">00</span> <span style="color:#f5a623">00</span> <span style="color:#e0ddd8">C0</span> <span style="color:#f5a623">49</span>
<span style="color:#f5a623">1587831213.688000</span> <span style="color:#e0ddd8">1R11</span> <span style="color:#e0ddd8">0000038B</span> <span style="color:#f5a623">47</span> <span style="color:#f5a623">44</span> <span style="color:#f5a623">00</span> <span style="color:#f5a623">11</span>
<span style="color:#f5a623">1587831213.689000</span> <span style="color:#e0ddd8">1R11</span> <span style="color:#e0ddd8">0000038C</span> <span style="color:#f5a623">22</span> <span style="color:#f5a623">44</span> <span style="color:#f5a623">43</span> <span style="color:#e0ddd8">7A</span>
<span style="color:#f5a623">1587831213.690000</span> <span style="color:#e0ddd8">1R11</span> <span style="color:#e0ddd8">0000038D</span> <span style="color:#f5a623">36</span> <span style="color:#f5a623">04</span> <span style="color:#f5a623">00</span> <span style="color:#f5a623">00</span> <span style="color:#f5a623">00</span> <span style="color:#e0ddd8">C0</span> <span style="color:#f5a623">49</span>
<span style="color:#f5a623">1587831213.691000</span> <span style="color:#e0ddd8">1R11</span> <span style="color:#e0ddd8">0000038B</span> <span style="color:#e0ddd8">C8</span> <span style="color:#f5a623">45</span> <span style="color:#f5a623">00</span> <span style="color:#f5a623">11</span>
<span style="color:#f5a623">1587831213.692000</span> <span style="color:#e0ddd8">1R11</span> <span style="color:#e0ddd8">0000038C</span> <span style="color:#f5a623">35</span> <span style="color:#f5a623">45</span> <span style="color:#f5a623">41</span> <span style="color:#e0ddd8">7A</span>
<span style="color:#f5a623">1587831213.693000</span> <span style="color:#e0ddd8">1R11</span> <span style="color:#e0ddd8">0000038D</span> <span style="color:#f5a623">70</span> <span style="color:#f5a623">05</span> <span style="color:#f5a623">00</span> <span style="color:#f5a623">00</span> <span style="color:#f5a623">00</span> <span style="color:#e0ddd8">C0</span> <span style="color:#f5a623">49</span>
<span style="color:#f5a623">1587831213.694000</span> <span style="color:#e0ddd8">1R11</span> <span style="color:#e0ddd8">0000038B</span> <span style="color:#f5a623">44</span> <span style="color:#f5a623">46</span> <span style="color:#f5a623">00</span> <span style="color:#f5a623">11</span>
<span style="color:#f5a623">1587831213.695000</span> <span style="color:#e0ddd8">1R11</span> <span style="color:#e0ddd8">0000038C</span> <span style="color:#f5a623">31</span> <span style="color:#f5a623">46</span> <span style="color:#f5a623">3E</span> <span style="color:#e0ddd8">7A</span>
<span style="color:#f5a623">1587831213.696000</span> <span style="color:#e0ddd8">1R11</span> <span style="color:#e0ddd8">0000038D</span> <span style="color:#e0ddd8">BA</span> <span style="color:#f5a623">06</span> <span style="color:#f5a623">00</span> <span style="color:#f5a623">00</span> <span style="color:#f5a623">00</span> <span style="color:#e0ddd8">C0</span> <span style="color:#f5a623">49</span>
<span style="color:#f5a623">1587831213.697000</span> <span style="color:#e0ddd8">1R11</span> <span style="color:#e0ddd8">0000038B</span> <span style="color:#e0ddd8">CB</span> <span style="color:#f5a623">47</span> <span style="color:#f5a623">00</span> <span style="color:#f5a623">11</span>
<span style="color:#f5a623">1587831213.698000</span> <span style="color:#e0ddd8">1R11</span> <span style="color:#e0ddd8">0000038C</span> <span style="color:#e0ddd8">E2</span> <span style="color:#f5a623">47</span> <span style="color:#f5a623">42</span> <span style="color:#e0ddd8">7A</span>
<span style="color:#f5a623">1587831213.699000</span> <span style="color:#e0ddd8">1R11</span> <span style="color:#e0ddd8">0000038D</span> <span style="color:#e0ddd8">FC</span> <span style="color:#f5a623">07</span> <span style="color:#f5a623">00</span> <span style="color:#f5a623">00</span> <span style="color:#f5a623">00</span> <span style="color:#e0ddd8">C0</span> <span style="color:#f5a623">49</span>
<span style="color:#f5a623">1587831213.700000</span> <span style="color:#e0ddd8">1R11</span> <span style="color:#e0ddd8">0000038B</span> <span style="color:#e0ddd8">4D</span> <span style="color:#f5a623">48</span> <span style="color:#f5a623">00</span> <span style="color:#f5a623">11</span>
<span style="color:#f5a623">1587831213.701000</span> <span style="color:#e0ddd8">1R11</span> <span style="color:#e0ddd8">0000038C</span> <span style="color:#e0ddd8">A6</span> <span style="color:#f5a623">48</span> <span style="color:#f5a623">48</span> <span style="color:#e0ddd8">7A</span>
<span style="color:#f5a623">1587831213.702000</span> <span style="color:#e0ddd8">1R11</span> <span style="color:#e0ddd8">0000038D</span> <span style="color:#f5a623">39</span> <span style="color:#f5a623">08</span> <span style="color:#f5a623">00</span> <span style="color:#f5a623">00</span> <span style="color:#f5a623">00</span> <span style="color:#e0ddd8">C0</span> <span style="color:#f5a623">49</span>
<span style="color:#f5a623">1587831213.703000</span> <span style="color:#e0ddd8">1R11</span> <span style="color:#e0ddd8">0000038B</span> <span style="color:#e0ddd8">C2</span> <span style="color:#f5a623">49</span> <span style="color:#f5a623">00</span> <span style="color:#f5a623">11</span>
<span style="color:#f5a623">1587831213.704000</span> <span style="color:#e0ddd8">1R11</span> <span style="color:#e0ddd8">0000038C</span> <span style="color:#f5a623">73</span> <span style="color:#f5a623">49</span> <span style="color:#f5a623">40</span> <span style="color:#e0ddd8">7A</span>
<span style="color:#f5a623">1587831213.705000</span> <span style="color:#e0ddd8">1R11</span> <span style="color:#e0ddd8">0000038D</span> <span style="color:#e0ddd8">7F</span> <span style="color:#f5a623">09</span> <span style="color:#f5a623">00</span> <span style="color:#f5a623">00</span> <span style="color:#f5a623">00</span> <span style="color:#e0ddd8">C0</span> <span style="color:#f5a623">49</span>
<span style="color:#f5a623">1587831213.706000</span> <span style="color:#e0ddd8">1R11</span> <span style="color:#e0ddd8">0000038B</span> <span style="color:#f5a623">4E</span> <span style="color:#e0ddd8">4A</span> <span style="color:#f5a623">00</span> <span style="color:#f5a623">11</span>
<span style="color:#f5a623">1587831213.707000</span> <span style="color:#e0ddd8">1R11</span> <span style="color:#e0ddd8">0000038C</span> <span style="color:#e0ddd8">4A</span> <span style="color:#e0ddd8">4A</span> <span style="color:#f5a623">46</span> <span style="color:#e0ddd8">7A</span>
<span style="color:#f5a623">1587831213.708000</span> <span style="color:#e0ddd8">1R11</span> <span style="color:#e0ddd8">0000038D</span> <span style="color:#e0ddd8">B5</span> <span style="color:#e0ddd8">0A</span> <span style="color:#f5a623">00</span> <span style="color:#f5a623">00</span> <span style="color:#f5a623">00</span> <span style="color:#e0ddd8">C0</span> <span style="color:#f5a623">49</span>
<span style="color:#f5a623">1587831213.709000</span> <span style="color:#e0ddd8">1R11</span> <span style="color:#e0ddd8">0000038B</span> <span style="color:#e0ddd8">C1</span> <span style="color:#e0ddd8">4B</span> <span style="color:#f5a623">00</span> <span style="color:#f5a623">11</span>
<span style="color:#f5a623">1587831213.710000</span> <span style="color:#e0ddd8">1R11</span> <span style="color:#e0ddd8">0000038C</span> <span style="color:#f5a623">11</span> <span style="color:#e0ddd8">4B</span> <span style="color:#f5a623">45</span> <span style="color:#e0ddd8">7A</span>
<span style="color:#f5a623">1587831213.711000</span> <span style="color:#e0ddd8">1R11</span> <span style="color:#e0ddd8">0000038D</span> <span style="color:#e0ddd8">F3</span> <span style="color:#e0ddd8">0B</span> <span style="color:#f5a623">00</span> <span style="color:#f5a623">00</span> <span style="color:#f5a623">00</span> <span style="color:#e0ddd8">C0</span> <span style="color:#f5a623">49</span>
<span style="color:#f5a623">1587831213.712000</span> <span style="color:#e0ddd8">1R11</span> <span style="color:#e0ddd8">0000038B</span> <span style="color:#e0ddd8">4B</span> <span style="color:#e0ddd8">4C</span> <span style="color:#f5a623">00</span> <span style="color:#f5a623">11</span>
<span style="color:#f5a623">1587831213.713000</span> <span style="color:#e0ddd8">1R11</span> <span style="color:#e0ddd8">0000038C</span> <span style="color:#e0ddd8">B6</span> <span style="color:#e0ddd8">4C</span> <span style="color:#f5a623">41</span> <span style="color:#e0ddd8">7A</span>
<span style="color:#f5a623">1587831213.714000</span> <span style="color:#e0ddd8">1R11</span> <span style="color:#e0ddd8">0000038D</span> <span style="color:#e0ddd8">3C</span> <span style="color:#e0ddd8">0C</span> <span style="color:#f5a623">00</span> <span style="color:#f5a623">00</span> <span style="color:#f5a623">00</span> <span style="color:#e0ddd8">C0</span> <span style="color:#f5a623">49</span>
<span style="color:#f5a623">1587831213.715000</span> <span style="color:#e0ddd8">1R11</span> <span style="color:#e0ddd8">0000038B</span> <span style="color:#e0ddd8">FB</span> <span style="color:#e0ddd8">4D</span> <span style="color:#f5a623">00</span> <span style="color:#f5a623">11</span>
<span style="color:#f5a623">1587831213.716000</span> <span style="color:#e0ddd8">1R11</span> <span style="color:#e0ddd8">0000038C</span> <span style="color:#e0ddd8">8B</span> <span style="color:#e0ddd8">4D</span> <span style="color:#e0ddd8">4B</span> <span style="color:#e0ddd8">7A</span>
<span style="color:#f5a623">1587831213.717000</span> <span style="color:#e0ddd8">1R11</span> <span style="color:#e0ddd8">0000038D</span> <span style="color:#e0ddd8">7A</span> <span style="color:#e0ddd8">0D</span> <span style="color:#f5a623">00</span> <span style="color:#f5a623">00</span> <span style="color:#f5a623">00</span> <span style="color:#e0ddd8">C0</span> <span style="color:#f5a623">49</span>
<span style="color:#f5a623">1587831213.718000</span> <span style="color:#e0ddd8">1R11</span> <span style="color:#e0ddd8">0000038B</span> <span style="color:#f5a623">48</span> <span style="color:#f5a623">4E</span> <span style="color:#f5a623">00</span> <span style="color:#f5a623">11</span>
<span style="color:#f5a623">1587831213.719000</span> <span style="color:#e0ddd8">1R11</span> <span style="color:#e0ddd8">0000038C</span> <span style="color:#e0ddd8">A3</span> <span style="color:#f5a623">4E</span> <span style="color:#f5a623">48</span> <span style="color:#e0ddd8">7A</span>
<span style="color:#f5a623">1587831213.720000</span> <span style="color:#e0ddd8">1R11</span> <span style="color:#e0ddd8">0000038D</span> <span style="color:#e0ddd8">B0</span> <span style="color:#f5a623">0E</span> <span style="color:#f5a623">00</span> <span style="color:#f5a623">00</span> <span style="color:#f5a623">00</span> <span style="color:#e0ddd8">C0</span> <span style="color:#f5a623">49</span>
<span style="color:#f5a623">1587831213.721000</span> <span style="color:#e0ddd8">1R11</span> <span style="color:#e0ddd8">0000038B</span> <span style="color:#e0ddd8">C7</span> <span style="color:#e0ddd8">4F</span> <span style="color:#f5a623">00</span> <span style="color:#f5a623">11</span>
<span style="color:#f5a623">1587831213.722000</span> <span style="color:#e0ddd8">1R11</span> <span style="color:#e0ddd8">0000038C</span> <span style="color:#e0ddd8">2C</span> <span style="color:#e0ddd8">4F</span> <span style="color:#f5a623">48</span> <span style="color:#e0ddd8">7A</span>
<span style="color:#f5a623">1587831213.723000</span> <span style="color:#e0ddd8">1R11</span> <span style="color:#e0ddd8">0000038D</span> <span style="color:#e0ddd8">F6</span> <span style="color:#e0ddd8">0F</span> <span style="color:#f5a623">00</span> <span style="color:#f5a623">00</span> <span style="color:#f5a623">00</span> <span style="color:#e0ddd8">C0</span> <span style="color:#f5a623">49</span></div>
<div class="abs" style="left:824px;top:949px;width:615px;height:20px;background:#323030;border-top:1px solid #2a2828"></div>
<div class="abs" style="left:1073px;top:956px;font-size:13px;line-height:15px;color:#cfcfcf;white-space:pre"><span style="letter-spacing:-0.9px;font-size:12.5px">CSV</span></div>
<div class="abs" style="left:1127px;top:956px;font-size:13px;line-height:15px;color:#cfcfcf;white-space:pre">Tab Width: 8</div>
<div class="abs" style="left:1267px;top:956px;font-size:13px;line-height:15px;color:#cfcfcf;white-space:pre">Ln 3, Col 53</div>
<div class="abs" style="left:1404px;top:956px;font-size:13px;line-height:15px;color:#cfcfcf;white-space:pre">INS</div>
<svg class="abs" style="left:1100px;top:960px" width="11" height="6"><path d="M0,0 L10,0 L5,5 Z" fill="#cfcfcf"/></svg>
<svg class="abs" style="left:1208px;top:960px" width="11" height="6"><path d="M0,0 L10,0 L5,5 Z" fill="#cfcfcf"/></svg>
<svg class="abs" style="left:1367px;top:960px" width="11" height="6"><path d="M0,0 L10,0 L5,5 Z" fill="#cfcfcf"/></svg>
</body></html>
